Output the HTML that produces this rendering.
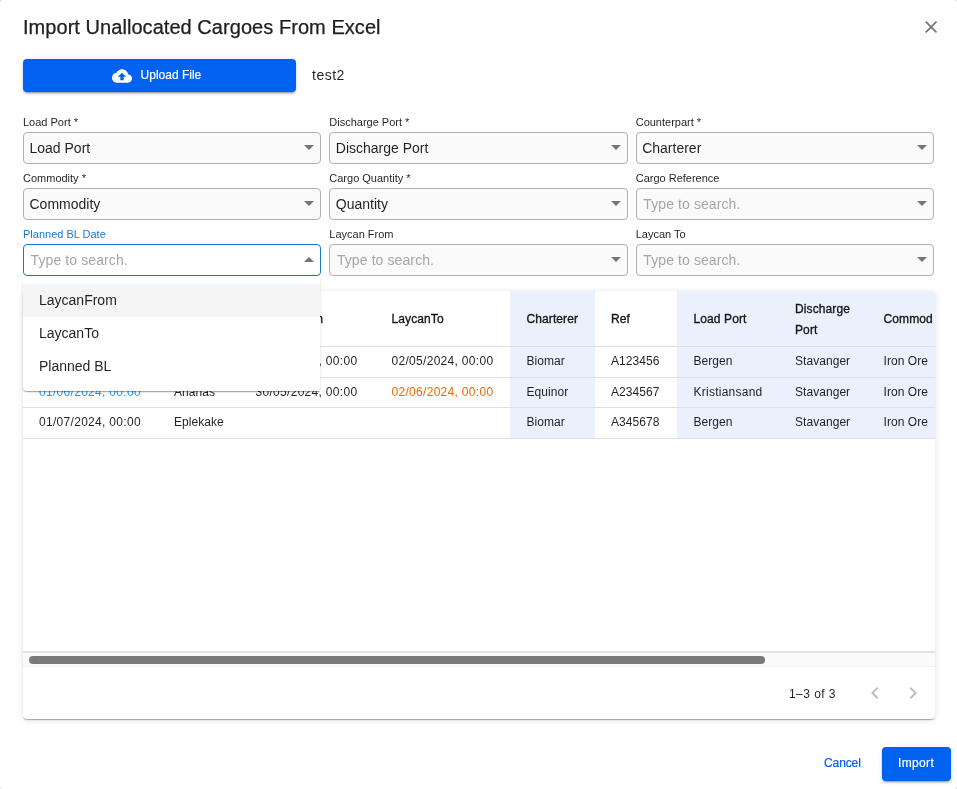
<!DOCTYPE html>
<html><head><meta charset="utf-8">
<style>
*{box-sizing:border-box;margin:0;padding:0}
html,body{width:957px;height:789px;overflow:hidden;background:#c8c8c8}
body{font-family:"Liberation Sans",sans-serif;color:rgba(0,0,0,0.87);position:relative}
#root{position:absolute;left:0;top:0;width:957px;height:789px;will-change:transform;background:#fff;border-radius:2.5px}
.a{position:absolute;white-space:nowrap}
.t{line-height:1}
#title{left:23px;top:17.2px;font-size:20px;letter-spacing:0.05px;-webkit-text-stroke:0.25px rgba(0,0,0,0.87)}
#close{left:921px;top:17px;width:20.6px;height:20.6px}
#upload{left:23px;top:59px;width:273px;height:33px;background:#0062EE;border-radius:4px;
 box-shadow:0 3px 1px -2px rgba(0,0,0,.2),0 2px 2px 0 rgba(0,0,0,.14),0 1px 5px 0 rgba(0,0,0,.12)}
#upicon{left:89px;top:6.5px;width:20px;height:20px}
#uptext{left:117.6px;top:10.3px;font-size:12px;color:#fff;-webkit-text-stroke:0.2px #fff}
#test2{left:312px;top:67.6px;font-size:14px;letter-spacing:0.5px}
.lbl{font-size:11px;color:rgba(0,0,0,0.87)}
.inp{height:32px;width:298.3px;border:1px solid #b0b0b0;border-radius:4px;background:#fafafa}
.inp .v{position:absolute;left:5.5px;top:8.2px;font-size:14px;line-height:1;white-space:nowrap}
.inp .ph{color:#a6a6a6;left:6.6px;letter-spacing:0.1px}
.arr{position:absolute;right:6px;top:12px;width:0;height:0;border-left:5px solid transparent;border-right:5px solid transparent;border-top:5px solid #757575}
.arr.up{border-top:0;border-bottom:5px solid #757575}
.focus{border-color:#1976d2;background:#fff}
/* table */
#paper{left:23px;top:291px;width:912px;height:428px;border-radius:4px;background:#fff;overflow:hidden;
 box-shadow:0 2px 1px -1px rgba(0,0,0,.2),0 1px 1px 0 rgba(0,0,0,.14),0 1px 6px 0 rgba(0,0,0,.12)}
.col{position:absolute;top:0;height:147px}
.hl{background:#eaf1fd}
.hline{position:absolute;left:0;width:912px;height:1px;background:#e0e0e0}
.cell{position:absolute;font-size:12px;line-height:1;white-space:nowrap;letter-spacing:0.05px}
.d{letter-spacing:0.3px}
.hd{letter-spacing:0.1px}
.hd{font-weight:normal;-webkit-text-stroke:0.35px rgba(0,0,0,0.87)}
#track{position:absolute;left:0;top:360px;width:912px;height:16px;background:#fafafa;border-top:2px solid #e2e2e2;border-bottom:1px solid #eeeeee}
#thumb{position:absolute;left:6px;top:3px;width:736px;height:8px;border-radius:4px;background:#7a7a7a}
#menu{left:23px;top:277px;width:297px;height:114px;background:#fff;border-radius:4px 0 0 4px;
 box-shadow:0 2px 1px -1px rgba(0,0,0,.2),0 1px 1px 0 rgba(0,0,0,.14),0 1px 3px 0 rgba(0,0,0,.12)}
.mi{position:absolute;left:0;width:297px;height:33px}
.mi span{position:absolute;left:16px;top:8.6px;font-size:14px;line-height:1;white-space:nowrap}
#import{left:882px;top:747px;width:69px;height:34px;background:#0062EE;border-radius:4px;
 box-shadow:0 3px 1px -2px rgba(0,0,0,.2),0 2px 2px 0 rgba(0,0,0,.14),0 1px 5px 0 rgba(0,0,0,.12)}
</style></head><body><div id="root">
<div class="a t" id="title">Import Unallocated Cargoes From Excel</div>
<svg class="a" id="close" viewBox="5 5 14 14" style="left:925px;top:21px;width:12.3px;height:12px"><path fill="#757575" d="M19 6.41 17.59 5 12 10.59 6.41 5 5 6.41 10.59 12 5 17.59 6.41 19 12 13.41 17.59 19 19 17.59 13.41 12z"/></svg>

<div class="a" id="upload">
 <svg class="a" id="upicon" viewBox="0 0 24 24"><path fill="#fff" d="M19.35 10.04C18.67 6.59 15.64 4 12 4 9.11 4 6.6 5.64 5.35 8.04 2.34 8.36 0 10.91 0 14c0 3.31 2.69 6 6 6h13c2.76 0 5-2.24 5-5 0-2.64-2.05-4.78-4.65-4.96M14 13v4h-4v-4H7l5-5 5 5z"/></svg>
 <div class="a t" id="uptext">Upload File</div>
</div>
<div class="a t" id="test2">test2</div>

<!-- row 1 -->
<div class="a t lbl" style="left:23px;top:117.3px">Load Port *</div>
<div class="a inp" style="left:23px;top:132px"><span class="v">Load Port</span><i class="arr"></i></div>
<div class="a t lbl" style="left:329.3px;top:117.3px">Discharge Port *</div>
<div class="a inp" style="left:329.3px;top:132px"><span class="v">Discharge Port</span><i class="arr"></i></div>
<div class="a t lbl" style="left:635.7px;top:117.3px">Counterpart *</div>
<div class="a inp" style="left:635.7px;top:132px"><span class="v">Charterer</span><i class="arr"></i></div>
<!-- row 2 -->
<div class="a t lbl" style="left:23px;top:173.3px">Commodity *</div>
<div class="a inp" style="left:23px;top:188px"><span class="v">Commodity</span><i class="arr"></i></div>
<div class="a t lbl" style="left:329.3px;top:173.3px">Cargo Quantity *</div>
<div class="a inp" style="left:329.3px;top:188px"><span class="v">Quantity</span><i class="arr"></i></div>
<div class="a t lbl" style="left:635.7px;top:173.3px">Cargo Reference</div>
<div class="a inp" style="left:635.7px;top:188px"><span class="v ph">Type to search.</span><i class="arr"></i></div>
<!-- row 3 -->
<div class="a t lbl" style="left:23px;top:229.3px;color:#1976d2">Planned BL Date</div>
<div class="a inp focus" style="left:23px;top:244px"><span class="v ph">Type to search.</span><i class="arr up"></i></div>
<div class="a t lbl" style="left:329.3px;top:229.3px">Laycan From</div>
<div class="a inp" style="left:329.3px;top:244px"><span class="v ph">Type to search.</span><i class="arr"></i></div>
<div class="a t lbl" style="left:635.7px;top:229.3px">Laycan To</div>
<div class="a inp" style="left:635.7px;top:244px"><span class="v ph">Type to search.</span><i class="arr"></i></div>

<!-- table -->
<div class="a" id="paper">
 <div class="col hl" style="left:487px;width:85px"></div>
 <div class="col hl" style="left:654px;width:258px"></div>
 <div class="hline" style="top:55px"></div>
 <div class="hline" style="top:86px"></div>
 <div class="hline" style="top:116px"></div>
 <div class="hline" style="top:147px"></div>
 <!-- header -->
 <span class="cell hd" style="left:16px;top:22.3px">Planned BL Date</span>
 <span class="cell hd" style="left:151px;top:22.3px">Vessel</span>
 <span class="cell hd" style="left:232.5px;top:22.3px">LaycanFrom</span>
 <span class="cell hd" style="left:368.5px;top:22.3px">LaycanTo</span>
 <span class="cell hd" style="left:503.5px;top:22.3px">Charterer</span>
 <span class="cell hd" style="left:588px;top:22.3px">Ref</span>
 <span class="cell hd" style="left:670.5px;top:22.3px">Load Port</span>
 <span class="cell hd" style="left:772px;top:8px;line-height:20.5px">Discharge<br>Port</span>
 <span class="cell hd" style="left:860.5px;top:22.3px">Commod</span>
 <!-- row1 -->
 <span class="cell d" style="left:16px;top:64.2px">01/05/2024, 00:00</span>
 <span class="cell" style="left:151px;top:64.2px">Banan</span>
 <span class="cell d" style="left:232.5px;top:64.2px">30/04/2024, 00:00</span>
 <span class="cell d" style="left:368.5px;top:64.2px">02/05/2024, 00:00</span>
 <span class="cell" style="left:503.5px;top:64.2px">Biomar</span>
 <span class="cell" style="left:588px;top:64.2px">A123456</span>
 <span class="cell" style="left:670.5px;top:64.2px">Bergen</span>
 <span class="cell" style="left:772px;top:64.2px">Stavanger</span>
 <span class="cell" style="left:860.5px;top:64.2px">Iron Ore</span>
 <!-- row2 -->
 <span class="cell d" style="left:16px;top:95px;color:#2196f3">01/06/2024, 00:00</span>
 <span class="cell" style="left:151px;top:95px">Ananas</span>
 <span class="cell d" style="left:232.5px;top:95px">30/05/2024, 00:00</span>
 <span class="cell d" style="left:368.5px;top:95px;color:#ed6c02">02/06/2024, 00:00</span>
 <span class="cell" style="left:503.5px;top:95px">Equinor</span>
 <span class="cell" style="left:588px;top:95px">A234567</span>
 <span class="cell" style="left:670.5px;top:95px;letter-spacing:0.25px">Kristiansand</span>
 <span class="cell" style="left:772px;top:95px">Stavanger</span>
 <span class="cell" style="left:860.5px;top:95px">Iron Ore</span>
 <!-- row3 -->
 <span class="cell d" style="left:16px;top:125.2px">01/07/2024, 00:00</span>
 <span class="cell" style="left:151px;top:125.2px">Eplekake</span>
 <span class="cell" style="left:503.5px;top:125.2px">Biomar</span>
 <span class="cell" style="left:588px;top:125.2px">A345678</span>
 <span class="cell" style="left:670.5px;top:125.2px">Bergen</span>
 <span class="cell" style="left:772px;top:125.2px">Stavanger</span>
 <span class="cell" style="left:860.5px;top:125.2px">Iron Ore</span>
 <div id="track"><div id="thumb"></div></div>
 <span class="cell" style="left:766px;top:396.5px;letter-spacing:0.45px">1–3 of 3</span>
 <svg style="position:absolute;left:840px;top:390px;width:24px;height:24px" viewBox="0 0 24 24"><path fill="#bdbdbd" d="M15.41 7.41 14 6l-6 6 6 6 1.41-1.41L10.83 12z"/></svg>
 <svg style="position:absolute;left:878px;top:390px;width:24px;height:24px" viewBox="0 0 24 24"><path fill="#bdbdbd" d="M10 6 8.59 7.41 13.17 12l-4.58 4.59L10 18l6-6z"/></svg>
</div>

<!-- menu -->
<div class="a" id="menu">
 <div class="mi" style="top:7px;background:#f5f5f5"><span>LaycanFrom</span></div>
 <div class="mi" style="top:40px"><span>LaycanTo</span></div>
 <div class="mi" style="top:73px"><span>Planned BL</span></div>
</div>

<div class="a t" style="left:824px;top:757.3px;font-size:12px;color:#0062EE;letter-spacing:-0.1px;-webkit-text-stroke:0.2px #0062EE">Cancel</div>
<div class="a" id="import"><div class="a t" style="left:16px;top:10.4px;font-size:12px;color:#fff;letter-spacing:0.35px;-webkit-text-stroke:0.2px #fff">Import</div></div>
</div></body></html>
